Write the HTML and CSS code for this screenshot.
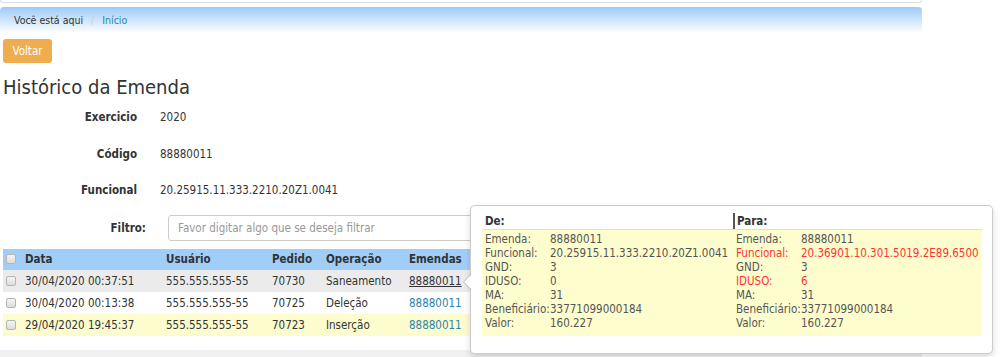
FILE: index.html
```html
<!DOCTYPE html>
<html lang="pt-BR">
<head>
    <meta charset="UTF-8">
    <title>Histórico da Emenda</title>
    <link rel="stylesheet" href="styles.css">
</head>
<body>
    <div class="topbar"></div>
    <div class="breadcrumb">
        <span>Você está aqui</span>
        <span class="sep">/</span>
        <a href="#">Início</a>
    </div>

    <button class="btn-voltar">Voltar</button>

    <h1>Histórico da Emenda</h1>

    <div class="info">
        <div class="label">Exercicio</div><div class="value">2020</div>
        <div class="label">Código</div><div class="value">88880011</div>
        <div class="label">Funcional</div><div class="value">20.25915.11.333.2210.20Z1.0041</div>
    </div>

    <div class="filtro">
        <label>Filtro:</label>
        <input type="text" placeholder="Favor digitar algo que se deseja filtrar">
    </div>

    <table class="grid">
        <colgroup>
            <col class="c-check"><col class="c-data"><col class="c-user"><col class="c-ped"><col class="c-op"><col class="c-em"><col>
        </colgroup>
        <thead>
            <tr>
                <th><span class="chk"></span></th>
                <th>Data</th>
                <th>Usuário</th>
                <th>Pedido</th>
                <th>Operação</th>
                <th>Emendas</th>
                <th></th>
            </tr>
        </thead>
        <tbody>
            <tr class="hover">
                <td><span class="chk"></span></td>
                <td>30/04/2020 00:37:51</td>
                <td>555.555.555-55</td>
                <td>70730</td>
                <td>Saneamento</td>
                <td><a href="#">88880011</a></td>
                <td></td>
            </tr>
            <tr>
                <td><span class="chk"></span></td>
                <td>30/04/2020 00:13:38</td>
                <td>555.555.555-55</td>
                <td>70725</td>
                <td>Deleção</td>
                <td><a href="#">88880011</a></td>
                <td></td>
            </tr>
            <tr class="insert">
                <td><span class="chk"></span></td>
                <td>29/04/2020 19:45:37</td>
                <td>555.555.555-55</td>
                <td>70723</td>
                <td>Inserção</td>
                <td><a href="#">88880011</a></td>
                <td></td>
            </tr>
        </tbody>
    </table>
    <div class="pager"></div>

    <!-- popover da emenda -->
    <div class="popover">
        <div class="pop-head">
            <div>De:</div>
            <div class="para">Para:</div>
        </div>
        <div class="pop-body">
            <dl>
                <dt>Emenda:</dt><dd>88880011</dd>
                <dt>Funcional:</dt><dd>20.25915.11.333.2210.20Z1.0041</dd>
                <dt>GND:</dt><dd>3</dd>
                <dt>IDUSO:</dt><dd>0</dd>
                <dt>MA:</dt><dd>31</dd>
                <dt>Beneficiário:</dt><dd>33771099000184</dd>
                <dt>Valor:</dt><dd>160.227</dd>
            </dl>
            <dl>
                <dt>Emenda:</dt><dd>88880011</dd>
                <dt class="diff">Funcional:</dt><dd class="diff">20.36901.10.301.5019.2E89.6500</dd>
                <dt>GND:</dt><dd>3</dd>
                <dt class="diff">IDUSO:</dt><dd class="diff">6</dd>
                <dt>MA:</dt><dd>31</dd>
                <dt>Beneficiário:</dt><dd>33771099000184</dd>
                <dt>Valor:</dt><dd>160.227</dd>
            </dl>
        </div>
    </div>
</body>
</html>
```

FILE: styles.css
```css
body {
    margin: 0;
    font-family: "DejaVu Sans Condensed", "DejaVu Sans", sans-serif;
    font-size: 11.5px;
    color: #333;
    background: #fff;
    position: relative;
}
a {
    color: #2a84b0;
    text-decoration: none;
}
.topbar {
    width: 920px;
    height: 2px;
    border: 1px solid #d9dee3;
    border-top: none;
    border-radius: 0 0 4px 4px;
}
.breadcrumb {
    width: 922px;
    height: 26px;
    margin-top: 4px;
    box-sizing: border-box;
    padding: 6px 0 0 14px;
    font-size: 10.5px;
    line-height: 14px;
    background: linear-gradient(#9ccbf8, #ffffff);
    border-radius: 4px 4px 0 0;
}
.breadcrumb .sep {
    color: #ccc;
    padding: 0 5px;
}
.btn-voltar {
    display: block;
    margin: 6px 0 0 3px;
    width: 49px;
    height: 24px;
    padding: 0;
    border: none;
    border-radius: 3px;
    background: #f0ad4e;
    color: #fff;
    font-family: inherit;
    font-size: 11.5px;
}
h1 {
    margin: 12px 0 0 3px;
    font-size: 20px;
    font-weight: normal;
    line-height: 24px;
}
.info {
    display: grid;
    grid-template-columns: 137px auto;
    column-gap: 23px;
    line-height: 16px;
}
.info .label,
.info .value {
    padding: 10px 0;
    height: 16.5px;
}
.info .label {
    text-align: right;
    font-weight: bold;
}
.filtro {
    display: flex;
    align-items: center;
    margin-top: 6px;
}
.filtro label {
    width: 146px;
    text-align: right;
    font-weight: bold;
}
.filtro input {
    margin-left: 22px;
    width: 600px;
    height: 26px;
    box-sizing: border-box;
    border: 1px solid #ccc;
    border-radius: 3px;
    padding: 0 9px;
    font-family: inherit;
    font-size: 11.5px;
}
.filtro input::placeholder {
    color: #999;
}
.grid {
    margin: 8px 0 0 3px;
    width: 917px;
    border-collapse: collapse;
    table-layout: fixed;
}
.c-check { width: 18px; }
.c-data { width: 141px; }
.c-user { width: 106px; }
.c-ped { width: 54px; }
.c-op { width: 83px; }
.c-em { width: 70px; }
.grid th,
.grid td {
    padding: 0 4px;
    text-align: left;
    white-space: nowrap;
    overflow: hidden;
}
.grid th:first-child,
.grid td:first-child {
    padding: 0 0 0 3px;
}
.grid th {
    height: 21px;
    background: #a1cef9;
    font-weight: bold;
}
.grid td {
    height: 22px;
}
.grid tr.hover td {
    background: #ebebeb;
}
.grid tr.hover a {
    color: #333;
    text-decoration: underline;
}
.grid tr.insert td {
    background: #fcfcce;
}
.chk {
    display: block;
    width: 8px;
    height: 8px;
    border: 1px solid #b5b5b5;
    border-radius: 2px;
    background: linear-gradient(#f4f4f4, #dcdcdc);
}
.pager {
    margin-top: 14px;
    width: 922px;
    height: 7px;
    background: #f0f0f0;
}
.popover {
    position: absolute;
    left: 470px;
    top: 205px;
    width: 523px;
    height: 149px;
    background: #fff;
    border: 1px solid rgba(0, 0, 0, 0.2);
    border-radius: 5px;
    box-shadow: 0 3px 6px rgba(0, 0, 0, 0.15);
    padding: 7px 10px 0 11px;
    box-sizing: border-box;
}
.popover::before,
.popover::after {
    content: "";
    position: absolute;
    top: 68px;
    border-style: solid;
    border-color: transparent;
}
.popover::before {
    left: -8px;
    border-width: 8px 8px 8px 0;
    border-right-color: rgba(0, 0, 0, 0.2);
}
.popover::after {
    left: -7px;
    top: 69px;
    border-width: 7px 7px 7px 0;
    border-right-color: #fff;
}
.pop-head {
    display: grid;
    grid-template-columns: 251px 250px;
    height: 16px;
    border-bottom: 1px solid #ddd;
    font-weight: bold;
    line-height: 16px;
}
.pop-head div {
    padding-left: 3px;
}
.pop-head .para {
    border-left: 2px solid #555;
    padding-left: 2px;
}
.pop-body {
    display: grid;
    grid-template-columns: 251px 250px;
    background: #fdfdcd;
    padding: 2px 0 6px;
}
.pop-body dl {
    display: grid;
    grid-template-columns: 65px auto;
    margin: 0;
    padding-left: 3px;
    line-height: 14px;
    color: #555;
}
.pop-body dd {
    margin: 0;
    white-space: nowrap;
}
.pop-body .diff {
    color: #f33;
}
```
